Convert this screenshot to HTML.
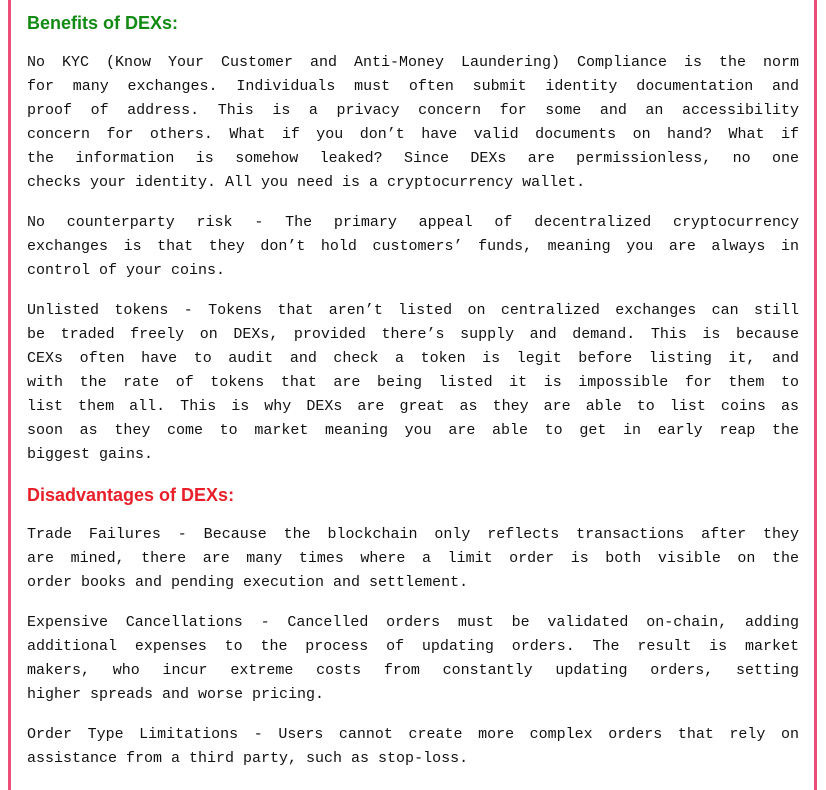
<!DOCTYPE html>
<html><head><meta charset="utf-8"><style>
html,body{margin:0;padding:0;background:#fff;width:826px;height:778px;overflow:hidden}
.box{position:absolute;left:8px;top:-10px;width:803px;height:800px;border-left:3px solid #ec4d7b;border-right:3px solid #ec4d7b}
.c{position:absolute;left:27px;top:11px;width:772px}
h2{margin:0 0 16px;font:bold 18px/24px "Liberation Sans",sans-serif}
.g{color:#138a13}.r{color:#e8202a}
p{margin:0 0 16px;font:15px/24px "Liberation Mono",monospace;color:#111}
p span{display:block;text-align:justify;text-align-last:justify;white-space:nowrap}
p span.l{text-align-last:left}
</style></head><body>
<div class="box"></div>
<div class="c">
<h2 class="g">Benefits of DEXs:</h2>
<p><span>No KYC (Know Your Customer and Anti-Money Laundering) Compliance is the norm</span><span>for many exchanges. Individuals must often submit identity documentation and</span><span>proof of address. This is a privacy concern for some and an accessibility</span><span>concern for others. What if you don’t have valid documents on hand? What if</span><span>the information is somehow leaked? Since DEXs are permissionless, no one</span><span class="l">checks your identity. All you need is a cryptocurrency wallet.</span></p>
<p><span>No counterparty risk - The primary appeal of decentralized cryptocurrency</span><span>exchanges is that they don’t hold customers’ funds, meaning you are always in</span><span class="l">control of your coins.</span></p>
<p><span>Unlisted tokens - Tokens that aren’t listed on centralized exchanges can still</span><span>be traded freely on DEXs, provided there’s supply and demand. This is because</span><span>CEXs often have to audit and check a token is legit before listing it, and</span><span>with the rate of tokens that are being listed it is impossible for them to</span><span>list them all. This is why DEXs are great as they are able to list coins as</span><span>soon as they come to market meaning you are able to get in early reap the</span><span class="l">biggest gains.</span></p>
<h2 class="r">Disadvantages of DEXs:</h2>
<p><span>Trade Failures - Because the blockchain only reflects transactions after they</span><span>are mined, there are many times where a limit order is both visible on the</span><span class="l">order books and pending execution and settlement.</span></p>
<p><span>Expensive Cancellations - Cancelled orders must be validated on-chain, adding</span><span>additional expenses to the process of updating orders. The result is market</span><span>makers, who incur extreme costs from constantly updating orders, setting</span><span class="l">higher spreads and worse pricing.</span></p>
<p><span>Order Type Limitations - Users cannot create more complex orders that rely on</span><span class="l">assistance from a third party, such as stop-loss.</span></p>
</div>
</body></html>
